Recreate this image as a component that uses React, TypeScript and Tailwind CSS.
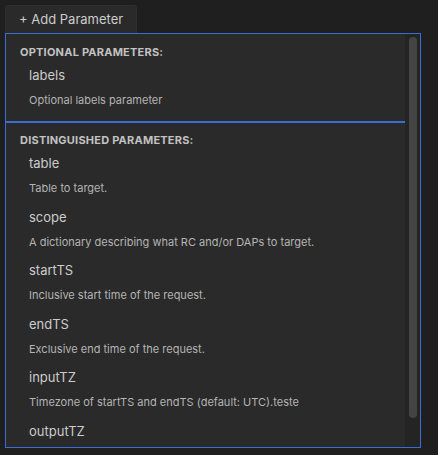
const optional = [{ name: 'labels', desc: 'Optional labels parameter' }];

const distinguished = [
  { name: 'table', desc: 'Table to target.' },
  { name: 'scope', desc: 'A dictionary describing what RC and/or DAPs to target.' },
  { name: 'startTS', desc: 'Inclusive start time of the request.' },
  { name: 'endTS', desc: 'Exclusive end time of the request.' },
  { name: 'inputTZ', desc: 'Timezone of startTS and endTS (default: UTC).teste' },
  { name: 'outputTZ', desc: 'Timezone of the output timestamps.' },
];

type Param = { name: string; desc: string };

function ParamItem({ param }: { param: Param }) {
  return (
    <div className="pl-[23px]">
      <div className="h-[20px] text-[13px] leading-[20px] text-[#cccccc]">{param.name}</div>
      <div className="mt-[7px] h-[16px] text-[11px] leading-[16px] text-[#b4b4b4]">{param.desc}</div>
    </div>
  );
}

function SectionHeader({ children }: { children: string }) {
  return (
    <div className="h-[14px] pl-[14px] text-[11px] font-bold uppercase leading-[14px] tracking-[0.02em] text-[#c2c2c2]">
      {children}
    </div>
  );
}

export default function App() {
  return (
    <div className="min-h-screen bg-[#1f1f1f] p-[5px] font-['Inter','Liberation_Sans',sans-serif]">
      <button
        className="flex h-[28px] w-[132px] items-center rounded-t-[3px] border border-b-0 border-[#2f2f2f] bg-[#2a2a2a] pl-[13px] text-[13px] text-[#cccccc]"
        type="button"
      >
        + Add Parameter
      </button>

      <div className="flex h-[415px] w-[416px] overflow-hidden border border-[#3a6ed6] bg-[#2a2a2a]">
        <div className="flex-1 overflow-hidden">
          <div className="border-b-2 border-[#3a6ed6] pb-[13px] pt-[11px]">
            <SectionHeader>Optional parameters:</SectionHeader>
            <div className="mt-[6px]">
              {optional.map((p) => (
                <ParamItem key={p.name} param={p} />
              ))}
            </div>
          </div>

          <div className="pt-[10px]">
            <SectionHeader>Distinguished parameters:</SectionHeader>
            <div className="mt-[6px] flex flex-col gap-[10.5px]">
              {distinguished.map((p) => (
                <ParamItem key={p.name} param={p} />
              ))}
            </div>
          </div>
        </div>

        <div className="w-[15px] shrink-0 bg-[#242424] pl-[4px] pr-[3px] pt-[3px]">
          <div className="h-[381px] rounded-full bg-[#444444]" />
        </div>
      </div>
    </div>
  );
}
